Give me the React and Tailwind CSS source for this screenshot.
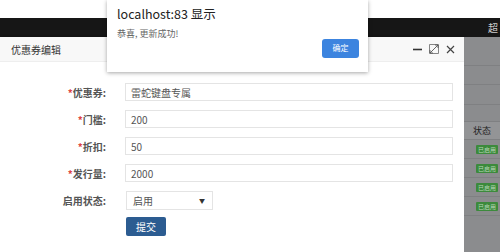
const fields = [
	{ label: '优惠券', value: '雷蛇键盘专属', required: true },
	{ label: '门槛', value: '200', required: true },
	{ label: '折扣', value: '50', required: true },
	{ label: '发行量', value: '2000', required: true },
];

const font = { fontFamily: '"Noto Sans CJK SC", "Noto Sans", sans-serif' };

const App = () => {
	return (
		<div className="relative w-[500px] h-[252px] overflow-hidden bg-white text-[#333]" style={font}>
			{/* top page area */}
			<div className="h-[18px] bg-white"></div>
			<div className="h-[19px] bg-[#161616] flex justify-end items-center pr-[2px]">
				<span className="text-[10px] text-[#ccc] leading-none">超</span>
			</div>

			<div className="flex h-[215px]">
				{/* layer modal */}
				<div className="w-[464px] bg-white flex flex-col shadow-[1px_0_3px_rgba(0,0,0,0.3)]">
					<div className="h-[25px] bg-[#f8f8f8] border-b border-[#eee] flex items-center justify-between pl-[11px] pr-[9px]">
						<span className="text-[10px] text-[#333]">优惠券编辑</span>
						<div className="flex items-center gap-[7px] text-[#444]">
							<svg width="9" height="9" viewBox="0 0 9 9">
								<path d="M0 4.5H9" stroke="#333" strokeWidth="1.6" />
							</svg>
							<svg width="10" height="10" viewBox="0 0 10 10" fill="none">
								<path d="M0.5 0.5H9.5V9.5H0.5Z" stroke="#777" strokeWidth="0.9" />
								<path d="M4 6L9 1M6 1H9V4" stroke="#555" strokeWidth="0.9" />
								<path d="M1 9L4 6M1 6V9H4" stroke="#555" strokeWidth="0.9" />
							</svg>
							<svg width="9" height="9" viewBox="0 0 9 9">
								<path d="M1 1L8 8M8 1L1 8" stroke="#444" strokeWidth="1.2" />
							</svg>
						</div>
					</div>

					<div className="flex flex-col gap-[9px] pt-[21px]">
						{fields.map((f) => (
							<div key={f.label} className="flex items-center">
								<label className="w-[106px] text-right text-[10px] font-bold text-[#555]">
									{f.required && <span className="text-[#d44]">*</span>}
									{f.label}:
								</label>
								<div className="ml-[19px] w-[328px] h-[18px] border border-[#e4e4e4] flex items-center px-[5px] text-[10px] text-[#555]">
									{f.value}
								</div>
							</div>
						))}
						<div className="flex items-center">
							<label className="w-[106px] text-right text-[10px] font-bold text-[#555]">启用状态:</label>
							<div className="ml-[20px] w-[87px] h-[19px] border border-[#e4e4e4] flex items-center justify-between pl-[6px] pr-[7px] text-[10px] text-[#555]">
								<span>启用</span>
								<span className="text-[6px] text-[#333]">▼</span>
							</div>
						</div>
						<div className="flex">
							<button className="ml-[126px] -mt-[2px] w-[40px] h-[19px] bg-[#2c5c91] rounded-[2px] text-white text-[10px]">
								提交
							</button>
						</div>
					</div>
				</div>

				{/* darkened page behind */}
				<div className="flex-1 bg-[#8b8c8e] flex flex-col">
					<div className="h-[29px] border-b border-[#7f8082]"></div>
					<div className="h-[19px] border-b border-[#7f8082]"></div>
					<div className="h-[20px] border-b border-[#7f8082]"></div>
					<div className="h-[17px] border-b border-[#7f8082]"></div>
					<div className="h-[18px] bg-[#939496] border-b border-[#7f8082] flex items-center justify-center">
						<span className="text-[9px] text-[#222]">状态</span>
					</div>
					{[0, 1, 2, 3].map((i) => (
						<div key={i} className="h-[19px] border-b border-[#7f8082] flex items-center justify-end pr-[2px]">
							<span className="w-[22px] h-[9px] bg-[#3c8a3c] rounded-[1px] text-[6px] leading-[9px] text-[#b9d8b9] text-center">已启用</span>
						</div>
					))}
				</div>
			</div>

			{/* browser alert */}
			<div className="absolute left-[107px] top-0 w-[261px] h-[72px] bg-white shadow-[0_1px_4px_rgba(0,0,0,0.35)] px-[10px] pt-[5px]">
				<div className="text-[12.5px] text-[#222] leading-[18px]">localhost:83 显示</div>
				<div className="text-[9px] text-[#666] mt-[4px]">恭喜, 更新成功!</div>
				<div className="flex justify-end -mt-[2px] -mr-[1px]">
					<button className="w-[37px] h-[19px] bg-[#3c84df] rounded-[3px] text-white text-[8px]">确定</button>
				</div>
			</div>
		</div>
	);
};

export default App;
